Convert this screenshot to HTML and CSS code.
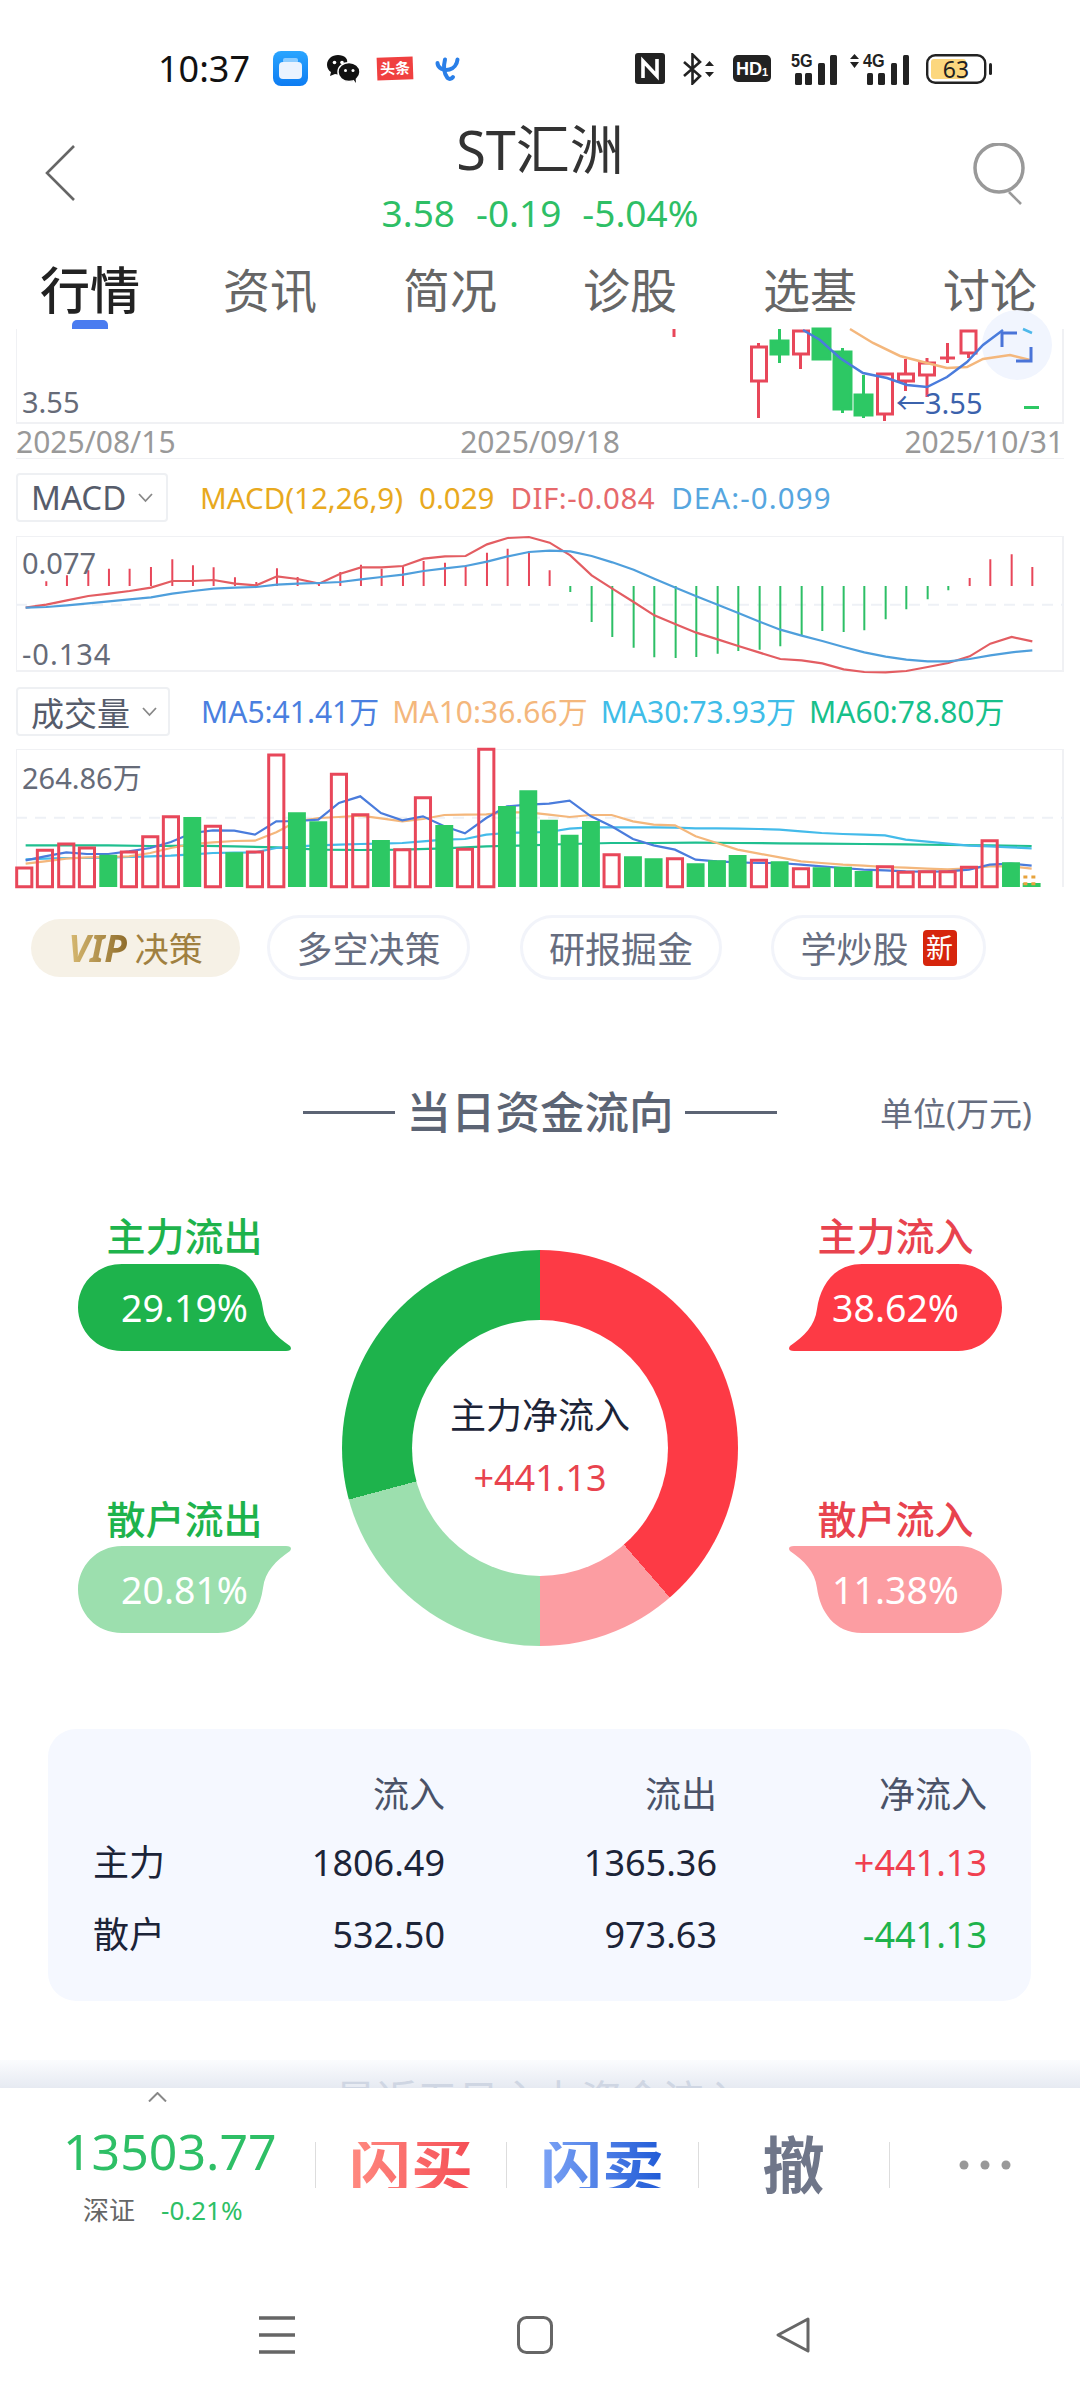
FILE: index.html
```html
<!DOCTYPE html>
<html lang="zh-CN">
<head>
    <meta charset="UTF-8">
    <meta name="viewport" content="width=device-width, initial-scale=1.0">
    <title>ST汇洲 行情</title>
    <link rel="stylesheet" href="styles.css">
</head>
<body>
    <div class="status-bar">
        <span class="clock">10:37</span>
        <svg class="ic-app" width="35" height="35" viewBox="0 0 35 35">
            <defs><linearGradient id="appBlue" x1="0" y1="0" x2="0" y2="1"><stop offset="0" stop-color="#2aa5ff"/><stop offset="1" stop-color="#0d7cf2"/></linearGradient></defs>
            <rect width="35" height="35" rx="8" fill="url(#appBlue)"/>
            <rect x="10" y="7" width="15" height="5" rx="2" fill="#8cccff"/>
            <rect x="6" y="11" width="23" height="17" rx="4" fill="#eaf3ff"/>
        </svg>
        <svg class="ic-wechat" width="33" height="28" viewBox="0 0 33 28">
            <path d="M11 0C5 0 0 4 0 10c0 3 2 6 4 7l-1 4 5-2c1 .3 2 .5 3 .5h8V10C23 4 17 0 11 0z" fill="#111"/>
            <ellipse cx="22" cy="17" rx="11" ry="9.5" fill="#111" stroke="#fff" stroke-width="1.5"/>
            <path d="M26 24l3 4-.5-6z" fill="#111"/>
            <circle cx="7.5" cy="7.5" r="1.8" fill="#fff"/>
            <circle cx="15" cy="7.5" r="1.8" fill="#fff"/>
            <circle cx="18.5" cy="15.5" r="1.5" fill="#fff"/>
            <circle cx="26" cy="15.5" r="1.5" fill="#fff"/>
        </svg>
        <span class="ic-toutiao">头条</span>
        <svg class="ic-telecom" width="25" height="25" viewBox="0 0 25 25" fill="none" stroke="#2a7fe8" stroke-width="4" stroke-linecap="round">
            <path d="M2.500 6c0 5 6 8 12 6.500 4-1 7.500-5 8-10"/>
            <path d="M10 2.500c-2 8-1 14 2.500 18.500 2 1.500 4 1 5.500-1"/>
        </svg>

        <div class="status-right">
            <svg width="30" height="31" viewBox="0 0 30 31">
                <rect width="30" height="31" rx="3" fill="#222"/>
                <path d="M8 25V8l14 15V6" fill="none" stroke="#fff" stroke-width="3.6"/>
            </svg>
            <svg class="ic-bt" width="33" height="32" viewBox="0 0 33 32" fill="none">
                <path d="M2 9l16 14-7.500 7.500V1.500L18 9 2 23" stroke="#222" stroke-width="2.6"/>
                <path d="M23 13l4.500-5 4.500 5zM23 19l4.500 5 4.500-5z" fill="#222"/>
            </svg>
            <svg class="ic-hd" width="38" height="27" viewBox="0 0 38 27">
                <rect width="38" height="27" rx="5" fill="#222"/>
                <text x="3" y="20" class="hd-text">HD</text>
                <text x="29" y="21" class="hd-sub">1</text>
            </svg>
            <svg class="ic-5g" width="46" height="38" viewBox="0 -6 46 38">
                <text class="net-text" transform="translate(0 14) scale(.9 1)">5G</text>
                <rect x="4" y="20" width="7" height="12" rx="1.500" fill="#222"/>
                <rect x="14" y="20" width="7" height="12" rx="1.500" fill="#222"/>
                <rect x="27" y="10" width="7" height="22" rx="1.500" fill="#222"/>
                <rect x="39" y="2" width="7" height="30" rx="1.500" fill="#222"/>
            </svg>
            <svg class="ic-4g" width="59" height="38" viewBox="0 -6 59 38">
                <path d="M0 6l4.500-5L9 6zM0 9l4.500 6L9 9z" fill="#222"/>
                <text class="net-text" transform="translate(13 14) scale(.9 1)">4G</text>
                <rect x="17" y="20" width="6" height="12" rx="1.500" fill="#222"/>
                <rect x="28" y="20" width="7" height="12" rx="1.500" fill="#222"/>
                <rect x="41" y="10" width="6" height="22" rx="1.500" fill="#222"/>
                <rect x="53" y="2" width="6" height="30" rx="1.500" fill="#222"/>
            </svg>
            <svg class="ic-battery" width="66" height="30" viewBox="0 0 66 30">
                <rect x="1.200" y="1.200" width="58" height="27.600" rx="8" fill="#fff" stroke="#222" stroke-width="2.400"/>
                <rect x="5" y="5" width="35" height="20" rx="3" fill="#fcd77e"/>
                <rect x="63" y="9" width="3" height="12" rx="1.500" fill="#222"/>
                <text x="30" y="24" class="battery-text" text-anchor="middle">63</text>
            </svg>
        </div>
    </div>

    <header class="stock-nav">
        <svg class="back-icon" width="70" height="56" viewBox="0 0 70 56" fill="none">
            <path d="M29 1L2 28l27 27" stroke="#666" stroke-width="2.600"/>
        </svg>
        <div class="stock-head">
            <div class="stock-name">ST汇洲</div>
            <div class="stock-quote"><span>3.58</span><span>-0.19</span><span>-5.04%</span></div>
        </div>
        <svg class="search-icon" width="70" height="62" viewBox="0 0 70 62" fill="none">
            <circle cx="34" cy="25" r="24" stroke="#999" stroke-width="3.500"/>
            <path d="M44 49l12 12" stroke="#999" stroke-width="2.600"/>
        </svg>
    </header>

    <nav class="tab-row">
        <a class="tab tab-active">行情</a>
        <a class="tab">资讯</a>
        <a class="tab">简况</a>
        <a class="tab">诊股</a>
        <a class="tab">选基</a>
        <a class="tab">讨论</a>
    </nav>

    <section class="chart-area">
        <div class="chart-box kline-box">
            <svg class="chart-svg" width="1048" height="93" viewBox="16 329 1048 93">
                <circle cx="1017" cy="345" r="35" fill="#f1f5fe"/>
                <path d="M674 329v8" stroke="#e8475a" stroke-width="3"/>
                <g class="candle-up">
                    <path d="M758.500 343v75M800.500 330v39M905.500 359v32M927 358v39M947.500 343v20M968.500 331v27M884.500 374v47"/>
                    <rect x="751.500" y="347" width="15" height="34"/>
                    <rect x="793.500" y="331" width="15" height="23"/>
                    <rect x="877.500" y="374" width="15" height="40"/>
                    <rect x="898.500" y="374" width="15" height="7"/>
                    <rect x="919.500" y="363" width="15" height="12"/>
                    <path d="M940 358h15"/>
                    <rect x="961" y="331" width="15" height="22"/>
                </g>
                <g class="candle-down">
                    <path d="M779.500 329v34M842.500 348v65M863.500 375v43"/>
                    <rect x="771" y="341" width="17" height="13"/>
                    <rect x="813" y="329" width="17" height="30"/>
                    <rect x="834" y="352" width="17" height="57"/>
                    <rect x="855" y="395" width="17" height="20"/>
                    <path d="M1024 407.500h15"/>
                </g>
                <polyline class="line-thin" stroke="#f4b77c" points="850,329 873,343 900,356 927,363 947,368 967,367 983,359 1010,355 1030,360"/>
                <polyline class="line-thin" stroke="#4a7cdc" points="803,330 820,340 840,358 863,373 887,378 907,385 927,387 947,377 967,362 983,345 1003,330"/>
                <path d="M1023 329l9 4" stroke="#4db8ea" stroke-width="2.500"/>
                <path d="M1017 333h-15v14M1016 361h15v-14" fill="none" stroke="#4a74d8" stroke-width="3"/>
            </svg>
            <span class="axis-label kline-low">3.55</span>
            <span class="kline-mark">←3.55</span>
        </div>
        <div class="date-row"><span>2025/08/15</span><span>2025/09/18</span><span>2025/10/31</span></div>

        <div class="indicator-row">
            <div class="indicator-select">MACD
                <svg width="15" height="10" viewBox="0 0 15 10" fill="none"><path d="M1 1l6.500 7L14 1" stroke="#888" stroke-width="1.800"/></svg>
            </div>
            <div class="legend">
                <span class="c-orange">MACD(12,26,9)</span>
                <span class="c-orange">0.029</span>
                <span class="c-red">DIF:-0.084</span>
                <span class="c-blue">DEA:-0.099</span>
            </div>
        </div>
        <div class="chart-box macd-box">
            <svg class="chart-svg" width="1048" height="136" viewBox="23 647 1522 408" preserveAspectRatio="none">
                <path class="dash-line" d="M23 853H1545"/>
                <path class="hist hist-up" d="M67 797V783M97 797V765M128 797V750M158 797V745M188 797V745M219 797V740M250 797V717M280 797V735M310 797V741M341 797V771M372 797V785M402 797V744M432 797V770M463 797V785M494 797V755M524 797V733M554 797V745M585 797V738M615 797V722M646 797V727M676 797V735M707 797V697M737 797V685M768 797V692M798 797V750M1408 797V773M1438 797V717M1469 797V702M1499 797V740"/>
                <path class="hist hist-down" d="M828 797V815M859 797V905M889 797V950M920 797V982M950 797V1011M981 797V1013M1011 797V1010M1042 797V1000M1072 797V992M1103 797V988M1133 797V978M1164 797V945M1194 797V932M1225 797V935M1255 797V930M1286 797V897M1316 797V867M1347 797V837M1377 797V810"/>
                <polyline class="line-thick" stroke="#e35d62" points="37,862 67,853 97,840 128,827 158,820 188,812 219,802 250,782 280,782 310,779 341,790 372,795 402,768 432,776 463,790 494,760 524,741 554,741 585,737 615,715 646,708 676,707 707,672 737,653 768,650 798,667 828,705 859,765 889,805 920,845 950,885 981,912 1011,937 1042,957 1072,977 1103,997 1133,1016 1164,1020 1194,1029 1225,1047 1255,1055 1286,1056 1316,1052 1347,1040 1377,1028 1408,1008 1438,970 1469,950 1499,963"/>
                <polyline class="line-thick" stroke="#4f9fdc" points="37,862 67,860 97,855 128,849 158,843 188,837 219,831 250,820 280,812 310,805 341,802 372,800 402,793 432,790 463,788 494,785 524,777 554,770 585,763 615,752 646,744 676,737 707,724 737,708 768,695 798,691 828,693 859,707 889,726 920,748 950,775 981,802 1011,828 1042,853 1072,878 1103,904 1133,928 1164,946 1194,962 1225,980 1255,996 1286,1009 1316,1018 1347,1023 1377,1023 1408,1016 1438,1005 1469,996 1499,990"/>
            </svg>
            <span class="axis-label macd-high">0.077</span>
            <span class="axis-label macd-low">-0.134</span>
        </div>

        <div class="indicator-row volume-row">
            <div class="indicator-select">成交量
                <svg width="15" height="10" viewBox="0 0 15 10" fill="none"><path d="M1 1l6.500 7L14 1" stroke="#888" stroke-width="1.800"/></svg>
            </div>
            <div class="legend">
                <span class="c-ma5">MA5:41.41万</span>
                <span class="c-ma10">MA10:36.66万</span>
                <span class="c-ma30">MA30:73.93万</span>
                <span class="c-ma60">MA60:78.80万</span>
            </div>
        </div>
        <div class="chart-box volume-box">
            <svg class="chart-svg" width="1048" height="138" viewBox="23 208 1522 414" preserveAspectRatio="none">
                <path class="dash-line" d="M23 414H1545"/>
                <polyline class="line-thick" stroke="#1fbf8f" points="37,497 96,497 157,497 218,499 279,498 340,500 401,503 462,510 523,511 584,510 645,506 706,500 767,497 827,493 888,490 949,490 1010,489 1071,490 1132,491 1193,492 1254,493 1315,494 1376,496 1437,497 1498,499"/>
                <polyline class="line-thick" stroke="#44bbea" points="37,539 65,537 96,535 126,535 157,534 187,532 218,530 248,528 279,524 309,520 340,519 370,518 401,505 431,500 462,497 492,495 523,493 553,492 584,490 614,485 645,480 675,478 706,465 736,460 767,458 797,457 827,447 858,443 888,443 919,443 949,443 980,444 1010,446 1041,446 1071,447 1102,448 1132,450 1163,455 1193,460 1224,463 1254,465 1285,467 1315,480 1346,486 1376,492 1407,498 1437,500 1468,503 1498,506"/>
                <polyline class="line-thick" stroke="#f4b77c" points="37,552 65,545 96,537 126,533 157,532 187,530 218,520 248,505 279,493 309,488 340,484 370,483 401,458 431,425 462,415 492,412 523,408 553,416 584,425 614,418 645,406 675,405 706,404 736,398 767,398 797,405 827,412 858,406 888,406 919,425 949,435 980,437 1010,470 1041,490 1071,510 1102,522 1132,533 1163,545 1193,550 1224,555 1254,558 1285,562 1315,564 1346,567 1376,569 1407,566 1437,560 1468,560 1498,567"/>
                <polyline class="line-thick" stroke="#4a7cdc" points="37,542 65,530 96,518 126,523 157,523 187,515 218,505 248,487 279,460 309,452 340,453 370,465 401,425 431,424 462,420 492,370 523,350 553,400 584,422 614,410 645,440 675,461 706,415 736,380 767,375 797,372 827,363 858,410 888,440 919,478 949,497 980,510 1010,540 1041,545 1071,548 1102,550 1132,550 1163,555 1193,560 1224,565 1254,570 1285,572 1315,575 1346,576 1376,575 1407,570 1437,555 1468,552 1498,558"/>
                <path class="vol-up" d="M24 565h22v56h-22zM54 512h22v109h-22zM85 493h22v128h-22zM115 505h22v116h-22zM176 517h22v104h-22zM207 471h22v150h-22zM237 411h22v210h-22zM298 440h22v181h-22zM359 517h22v104h-22zM390 226h22v395h-22zM481 284h22v337h-22zM512 405h22v216h-22zM573 510h22v111h-22zM603 354h22v267h-22zM664 509h22v112h-22zM695 209h22v412h-22zM877 525h22v96h-22zM969 537h22v84h-22zM1091 542h22v79h-22zM1152 567h22v54h-22zM1274 561h22v60h-22zM1304 578h22v43h-22zM1335 576h22v45h-22zM1365 576h22v45h-22zM1396 563h22v58h-22zM1426 483h22v138h-22z"/>
                <path class="vol-down" d="M144 525h26v97h-26zM266 412h26v210h-26zM327 518h26v104h-26zM418 398h26v224h-26zM449 425h26v197h-26zM540 481h26v141h-26zM632 436h26v186h-26zM723 379h26v243h-26zM754 332h26v290h-26zM784 420h26v202h-26zM814 465h26v157h-26zM845 424h26v198h-26zM906 530h26v92h-26zM936 536h26v86h-26zM997 551h26v71h-26zM1028 542h26v80h-26zM1058 526h26v96h-26zM1119 545h26v77h-26zM1180 563h26v59h-26zM1211 561h26v61h-26zM1241 574h26v48h-26zM1455 548h26v74h-26zM1485 610h26v12h-26z"/>
                <path class="vol-dots" d="M1486 592h22M1486 612h22"/>
            </svg>
            <span class="axis-label volume-high">264.86万</span>
        </div>
    </section>

    <div class="chip-row">
        <div class="chip chip-vip"><span class="vip-word">VIP</span>决策</div>
        <div class="chip chip-a">多空决策</div>
        <div class="chip chip-b">研报掘金</div>
        <div class="chip chip-c">学炒股<span class="new-badge">新</span></div>
    </div>

    <div class="flow-title">
        <span class="flow-dash"></span>
        <h2>当日资金流向</h2>
        <span class="flow-dash"></span>
        <span class="flow-unit">单位(万元)</span>
    </div>

    <section class="flow-board">
        <div class="flow-side">
            <div class="flow-item c-main-out">
                <div class="flow-name">主力流出</div>
                <div class="bubble">
                    <svg width="213" height="87" viewBox="0 0 213 87"><path fill="#1eb34c" d="M44 0H140C168 0 182 22 185 45 187 62 198 72 212 82 214 85 213 87 208 87H44C18 87 0 66 0 43.500 0 20 18 0 44 0Z"/></svg>
                    <span>29.19%</span>
                </div>
            </div>
            <div class="flow-item flow-item-low c-main-out">
                <div class="flow-name">散户流出</div>
                <div class="bubble">
                    <svg class="flip-y" width="213" height="87" viewBox="0 0 213 87"><path fill="#9cdfae" d="M44 0H140C168 0 182 22 185 45 187 62 198 72 212 82 214 85 213 87 208 87H44C18 87 0 66 0 43.500 0 20 18 0 44 0Z"/></svg>
                    <span>20.81%</span>
                </div>
            </div>
        </div>

        <div class="donut">
            <div class="donut-hole">
                <div class="donut-title">主力净流入</div>
                <div class="donut-value">+441.13</div>
            </div>
        </div>

        <div class="flow-side">
            <div class="flow-item c-main-in">
                <div class="flow-name">主力流入</div>
                <div class="bubble">
                    <svg class="flip-x" width="213" height="87" viewBox="0 0 213 87"><path fill="#fd3a45" d="M44 0H140C168 0 182 22 185 45 187 62 198 72 212 82 214 85 213 87 208 87H44C18 87 0 66 0 43.500 0 20 18 0 44 0Z"/></svg>
                    <span>38.62%</span>
                </div>
            </div>
            <div class="flow-item flow-item-low c-main-in">
                <div class="flow-name">散户流入</div>
                <div class="bubble">
                    <svg class="flip-xy" width="213" height="87" viewBox="0 0 213 87"><path fill="#fc9da2" d="M44 0H140C168 0 182 22 185 45 187 62 198 72 212 82 214 85 213 87 208 87H44C18 87 0 66 0 43.500 0 20 18 0 44 0Z"/></svg>
                    <span>11.38%</span>
                </div>
            </div>
        </div>
    </section>

    <div class="flow-table">
        <div class="table-head"></div>
        <div class="table-head num">流入</div>
        <div class="table-head num">流出</div>
        <div class="table-head num">净流入</div>

        <div>主力</div>
        <div class="num">1806.49</div>
        <div class="num">1365.36</div>
        <div class="num val-up">+441.13</div>

        <div>散户</div>
        <div class="num">532.50</div>
        <div class="num">973.63</div>
        <div class="num val-down">-441.13</div>
    </div>

    <div class="fade-strip"><span>最近五日主力资金流入</span></div>

    <div class="trade-bar">
        <div class="index-block">
            <svg class="index-caret" width="19" height="10" viewBox="0 0 19 10" fill="none"><path d="M1 9.500L9.500 1 18 9.500" stroke="#888" stroke-width="2"/></svg>
            <div class="index-value">13503.77</div>
            <div class="index-sub"><span class="index-name">深证</span><span class="index-change">-0.21%</span></div>
        </div>
        <div class="trade-cell"><span class="trade-buy">闪买</span></div>
        <div class="trade-cell"><span class="trade-sell">闪卖</span></div>
        <div class="trade-cell"><span class="trade-cancel">撤</span></div>
        <div class="trade-cell">
            <svg width="52" height="10" viewBox="0 0 52 10"><circle cx="5" cy="5" r="4.500" fill="#999"/><circle cx="26" cy="5" r="4.500" fill="#999"/><circle cx="47" cy="5" r="4.500" fill="#999"/></svg>
        </div>
    </div>

    <div class="system-nav">
        <svg width="36" height="38" viewBox="0 0 36 38"><path d="M0 2h36M0 19h36M0 36h36" stroke="#666" stroke-width="3.500"/></svg>
        <svg width="36" height="38" viewBox="0 0 36 38"><rect x="1.500" y="1.500" width="33" height="35" rx="8" fill="none" stroke="#666" stroke-width="3"/></svg>
        <svg width="36" height="38" viewBox="0 0 36 38"><path d="M33 3L3 19l30 16z" fill="none" stroke="#666" stroke-width="3" stroke-linejoin="round"/></svg>
    </div>
</body>
</html>
```
FILE: styles.css
```css
* {
    box-sizing: border-box;
}
html, body {
    margin: 0;
    padding: 0;
}
body {
    width: 1080px;
    height: 2400px;
    overflow: hidden;
    background: #fff;
    color: #222;
    font-family: "Noto Sans", "Noto Sans CJK SC", sans-serif;
}

/* status bar */
.status-bar {
    height: 124px;
    padding: 51px 88px 0 158px;
    display: flex;
    align-items: flex-start;
}
.status-bar > * {
    flex: none;
}
.clock {
    font-size: 36px;
    line-height: 35px;
    color: #111;
}
.ic-app { margin-left: 23px; }
.ic-wechat { margin: 4px 0 0 19px; }
.ic-toutiao {
    margin: 6px 0 0 17px;
    width: 36px;
    height: 23px;
    background: #f04040;
    color: #fff;
    font-size: 15px;
    line-height: 23px;
    font-weight: 700;
    text-align: center;
    transform: rotate(-2deg);
}
.ic-telecom { margin: 6px 0 0 22px; }
.status-right {
    margin-left: auto;
    display: flex;
    align-items: center;
    height: 35px;
}
.ic-bt { margin-left: 17px; }
.ic-hd { margin-left: 18px; }
.ic-5g { margin: 0 0 0 20px; transform: translateY(-3px); }
.ic-4g { margin: 0 0 0 13px; transform: translateY(-3px); }
.ic-battery { margin-left: 17px; }
.hd-text {
    font: 700 18px "Liberation Sans", sans-serif;
    fill: #fff;
}
.hd-sub {
    font: 700 11px "Liberation Sans", sans-serif;
    fill: #fff;
}
.net-text {
    font: 700 18px "Liberation Sans", sans-serif;
    fill: #222;
}
.battery-text {
    font: 400 23px "Noto Sans", sans-serif;
    fill: #222;
}

/* stock title */
.stock-nav {
    padding: 0 45px;
    display: flex;
    align-items: flex-start;
}
.back-icon { margin-top: 21px; flex: none; }
.search-icon { margin-top: 19px; flex: none; }
.stock-head {
    flex: 1;
    text-align: center;
}
.stock-name {
    font-size: 54px;
    line-height: 50px;
    color: #333;
}
.stock-quote {
    margin-top: 19px;
    display: flex;
    justify-content: center;
    gap: 21px;
    font-size: 37px;
    line-height: 40px;
    color: #2ebf66;
}

/* tabs */
.tab-row {
    margin-top: 27px;
    display: grid;
    grid-template-columns: repeat(6, 180px);
}
.tab {
    height: 69px;
    font-size: 47px;
    line-height: 60px;
    color: #666;
    text-align: center;
}
.tab-active {
    font-size: 50px;
    font-weight: 500;
    color: #222;
}
.tab-active::after {
    content: "";
    display: block;
    width: 36px;
    height: 9px;
    margin: 0 auto;
    background: #4a7cf0;
    border-radius: 5px 5px 0 0;
}

/* charts */
.chart-area {
    padding: 0 16px;
}
.chart-box {
    position: relative;
    width: 1048px;
    border: solid #f0f1f4;
    border-width: 0 2px 0 1px;
}
.chart-svg {
    display: block;
    overflow: visible;
    margin: 0 -2px 0 -1px;
}
.chart-svg * {
    vector-effect: non-scaling-stroke;
}
.kline-box {
    height: 95px;
    border-bottom-width: 2px;
}
.macd-box {
    height: 136px;
    margin-top: 14px;
    border-top-width: 1px;
    border-bottom-width: 2px;
}
.volume-box {
    height: 138px;
    margin-top: 13px;
    border-top-width: 1px;
}
.macd-box .chart-svg, .volume-box .chart-svg {
    margin-top: -1px;
}
.axis-label {
    position: absolute;
    left: 5px;
    font-size: 29px;
    line-height: 30px;
    color: #666b78;
}
.kline-low { top: 58px; }
.macd-high { top: 11px; }
.macd-low { top: 102px; letter-spacing: 1px; }
.volume-high { top: 13px; }
.kline-mark {
    position: absolute;
    left: 879px;
    top: 59px;
    font-size: 29px;
    line-height: 30px;
    color: #3b62ac;
}
.candle-up * {
    fill: #fff;
    stroke: #e8475a;
    stroke-width: 3;
}
.candle-down * {
    fill: #2dc864;
    stroke: #2dc864;
    stroke-width: 3;
}
.line-thin {
    fill: none;
    stroke-width: 2.5;
}
.line-thick {
    fill: none;
    stroke-width: 2.2;
}
.dash-line {
    stroke: #eef1f6;
    stroke-width: 2;
    stroke-dasharray: 11 8;
}
.hist {
    stroke-width: 2;
    fill: none;
}
.hist-up { stroke: #e8475a; }
.hist-down { stroke: #2dbf66; }
.vol-up {
    fill: none;
    stroke: #e8475a;
    stroke-width: 3;
}
.vol-down {
    fill: #2dc864;
}
.vol-dots {
    fill: none;
    stroke: #e8a33d;
    stroke-width: 3;
    stroke-dasharray: 4 4;
}
.date-row {
    height: 35px;
    display: flex;
    justify-content: space-between;
    align-items: center;
    font-size: 30px;
    color: #999;
    border-bottom: 1px solid #f0f1f4;
}
.indicator-row {
    margin-top: 14px;
    height: 49px;
    display: flex;
    align-items: center;
}
.volume-row {
    margin-top: 15px;
}
.indicator-select {
    width: 152px;
    height: 49px;
    padding-left: 13px;
    display: flex;
    align-items: center;
    gap: 12px;
    border: 2px solid #eef0f3;
    border-radius: 4px;
    font-size: 33px;
    color: #565c6b;
}
.volume-row .indicator-select {
    width: 154px;
}
.legend {
    margin-left: 32px;
    display: flex;
    gap: 16px;
    font-size: 29.5px;
    line-height: 49px;
}
.volume-row .legend {
    margin-left: 31px;
    font-size: 30px;
    gap: 13px;
}
.c-orange { color: #e8a91e; }
.c-red { color: #e6696b; letter-spacing: .5px; }
.c-blue { color: #56a6df; letter-spacing: 1.1px; }
.c-ma5 { color: #4a7fe0; }
.c-ma10 { color: #f4b77c; }
.c-ma30 { color: #3fbde8; }
.c-ma60 { color: #17c08a; }

/* chips */
.chip-row {
    margin: 28px 0 0 31px;
    display: flex;
    align-items: center;
}
.chip {
    height: 65px;
    display: flex;
    align-items: center;
    justify-content: center;
    border: 3px solid #f2f4fa;
    border-radius: 33px;
    font-size: 36px;
    color: #666d7f;
}
.chip-vip {
    width: 209px;
    height: 58px;
    border: 0;
    background: #f6f1e6;
    font-size: 34px;
    color: #a08040;
    gap: 8px;
}
.vip-word {
    font-size: 37px;
    font-weight: 700;
    font-style: italic;
    background-image: linear-gradient(90deg, #d9bb73, #8f6d2c);
    -webkit-background-clip: text;
    background-clip: text;
    color: transparent;
}
.chip-a { width: 203px; margin-left: 27px; }
.chip-b { width: 202px; margin-left: 50px; }
.chip-c { width: 215px; margin-left: 49px; gap: 14px; }
.new-badge {
    width: 34px;
    height: 36px;
    border-radius: 4px;
    background: #d6250c;
    color: #fff;
    font-size: 27px;
    line-height: 36px;
    text-align: center;
}

/* money flow */
.flow-title {
    margin-top: 107px;
    height: 50px;
    padding-left: 303px;
    display: flex;
    align-items: center;
    color: #5c6474;
}
.flow-title h2 {
    margin: 0 11px;
    width: 268px;
    font-size: 44.5px;
    font-weight: 500;
    line-height: 50px;
    text-align: center;
    white-space: nowrap;
}
.flow-dash {
    width: 92px;
    height: 3px;
    background: #5c6474;
}
.flow-unit {
    margin-left: 103px;
    font-size: 33px;
    color: #666d7f;
    white-space: nowrap;
}
.flow-board {
    margin-top: 79px;
    padding: 0 78px;
    display: flex;
    justify-content: space-between;
    align-items: flex-start;
}
.flow-side {
    width: 213px;
}
.flow-item {
    text-align: center;
}
.flow-item-low {
    margin-top: 148px;
}
.flow-name {
    font-size: 39px;
    font-weight: 500;
    line-height: 40px;
    margin-bottom: 8px;
}
.flow-item-low .flow-name {
    margin-bottom: 7px;
}
.c-main-out .flow-name { color: #1eb34c; }
.c-main-in .flow-name { color: #e8434e; }
.bubble {
    position: relative;
    width: 213px;
    height: 87px;
    display: flex;
    align-items: center;
    justify-content: center;
}
.bubble svg {
    position: absolute;
    left: 0;
    top: 0;
}
.bubble span {
    position: relative;
    font-size: 37.5px;
    color: #fff;
}
.flip-x { transform: scaleX(-1); }
.flip-y { transform: scaleY(-1); }
.flip-xy { transform: scale(-1, -1); }
.donut {
    margin-top: 34px;
    width: 396px;
    height: 396px;
    border-radius: 50%;
    display: flex;
    align-items: center;
    justify-content: center;
    background: conic-gradient(#fd3a45 0 38.62%, #fc9da2 0 50%, #9cdfae 0 70.81%, #1eb34c 0);
}
.donut-hole {
    width: 256px;
    height: 256px;
    padding-bottom: 3px;
    border-radius: 50%;
    background: #fff;
    display: flex;
    flex-direction: column;
    align-items: center;
    justify-content: center;
    gap: 20px;
}
.donut-title {
    font-size: 36px;
    line-height: 42px;
    color: #1c2438;
}
.donut-value {
    font-size: 36px;
    line-height: 42px;
    color: #e8434e;
}

/* table */
.flow-table {
    margin: 83px 0 0 48px;
    width: 983px;
    height: 272px;
    padding: 45px 44px 0 45px;
    background: #f5f8ff;
    border-radius: 28px;
    display: grid;
    grid-template-columns: 102px 250px 272px 270px;
    grid-template-rows: 68px 72px 42px;
    align-items: start;
    font-size: 36px;
    line-height: 42px;
    color: #1c2438;
}
.num {
    text-align: right;
}
.table-head {
    color: #4a5268;
}
.val-up { color: #f04050; }
.val-down { color: #1eb34c; }

/* bottom */
.fade-strip {
    margin-top: 59px;
    height: 28px;
    overflow: hidden;
    text-align: center;
    background: linear-gradient(#fbfcfe, #e6eaf2);
}
.fade-strip span {
    display: block;
    height: 14px;
    margin-top: 14px;
    overflow: hidden;
    font-size: 41px;
    line-height: 50px;
    color: #cfd6e3;
}
.trade-bar {
    height: 228px;
    display: flex;
    align-items: flex-start;
}
.index-block {
    width: 315px;
    padding: 4px 0 0 63px;
    flex: none;
}
.index-caret {
    display: block;
    margin-left: 85px;
}
.index-value {
    margin-top: 24px;
    font-size: 50px;
    line-height: 50px;
    color: #2ebf66;
    white-space: nowrap;
}
.index-sub {
    margin: 19px 0 0 20px;
    display: flex;
    gap: 26px;
    font-size: 26px;
    line-height: 30px;
}
.index-name { color: #666; }
.index-change { color: #2ebf66; }
.trade-cell {
    margin-top: 54px;
    flex: 1;
    height: 46px;
    display: flex;
    align-items: center;
    justify-content: center;
    border-left: 1px solid #ddd;
    font-size: 62px;
    line-height: 46px;
    font-weight: 700;
}
.trade-buy, .trade-sell {
    -webkit-background-clip: text;
    background-clip: text;
    color: transparent;
}
.trade-buy { background-image: linear-gradient(90deg, #ff8a80, #f54d55); }
.trade-sell { background-image: linear-gradient(90deg, #7da4f6, #1f5ad6); }
.trade-cancel { color: #6f7689; }
.system-nav {
    padding-left: 259px;
    display: flex;
    gap: 222px;
}
```
